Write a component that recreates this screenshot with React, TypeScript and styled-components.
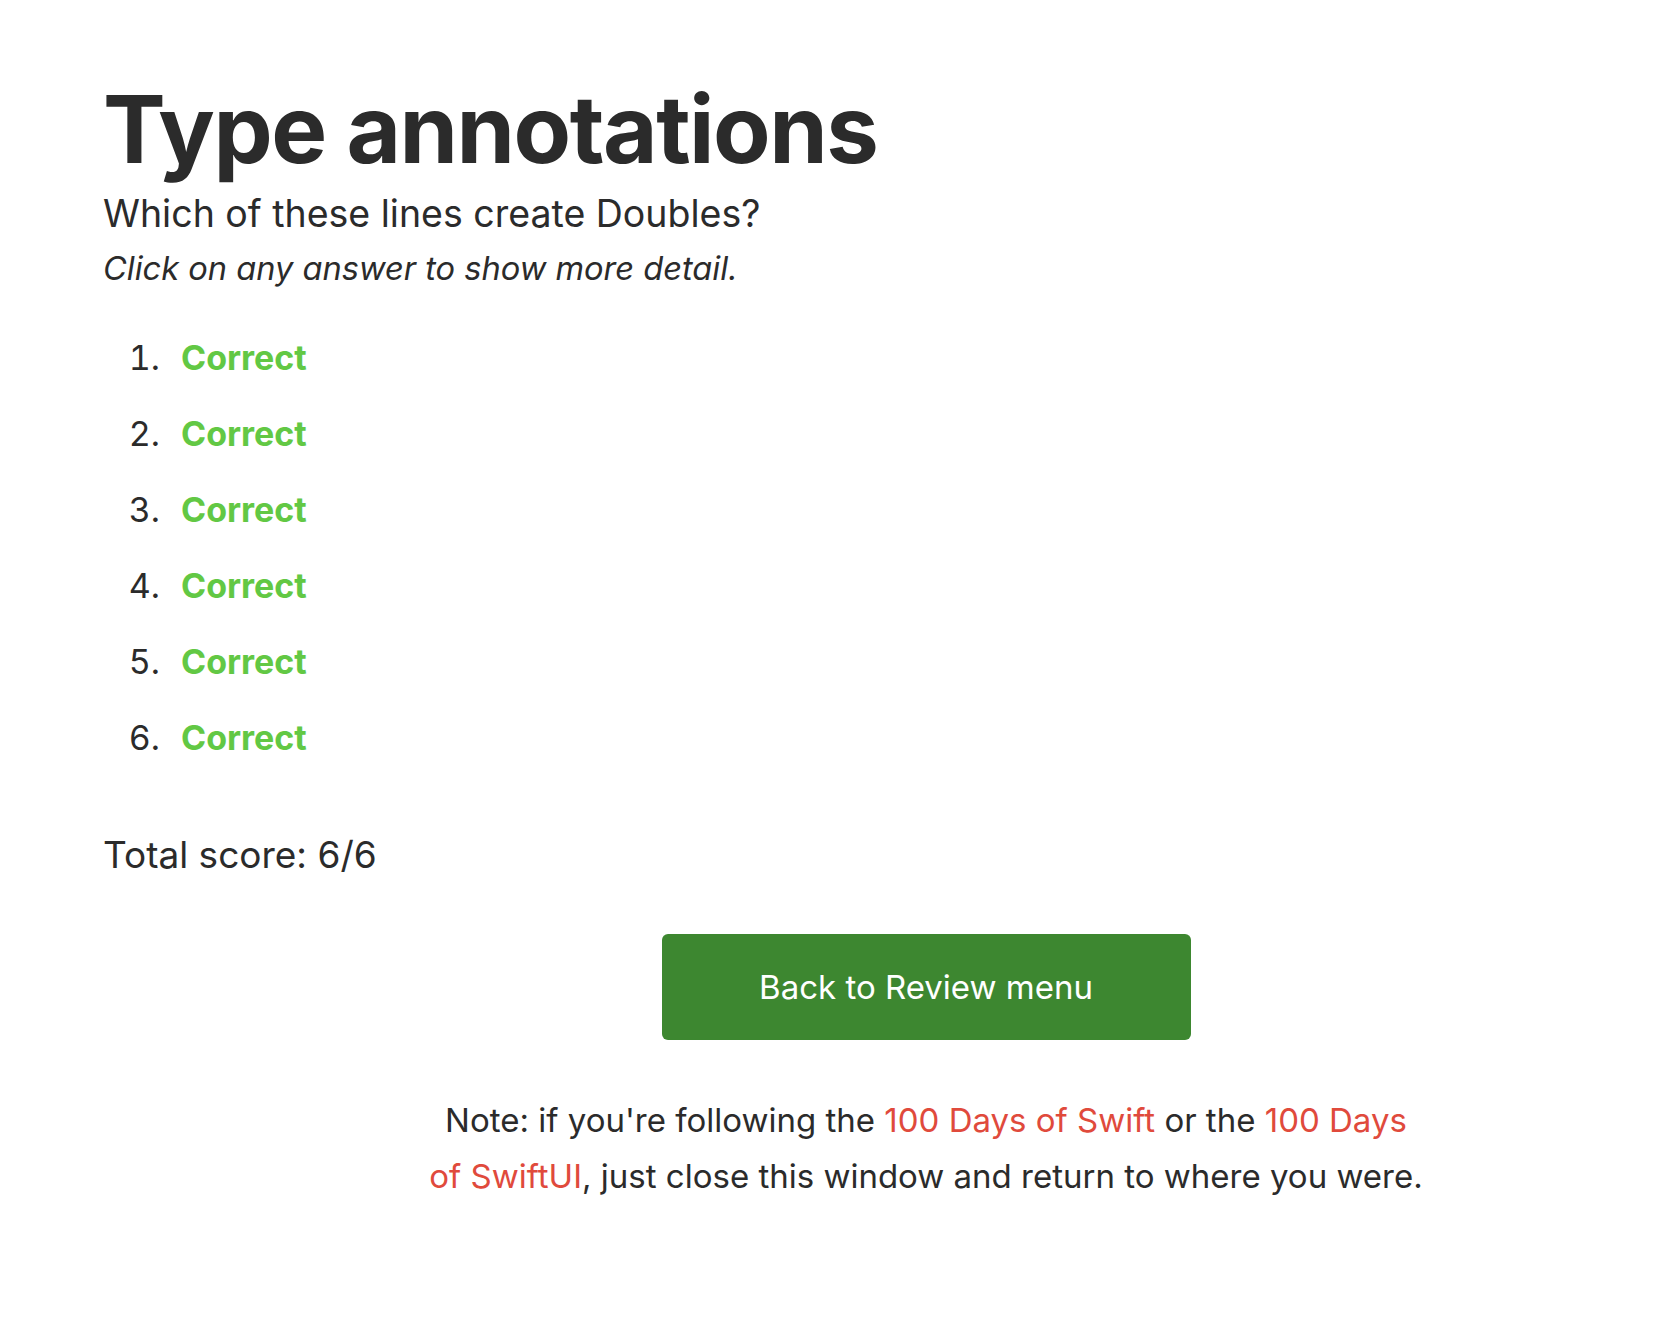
import React from "react";
import styled, { createGlobalStyle } from "styled-components";

const GlobalStyle = createGlobalStyle`
  body {
    margin: 0;
    background: #ffffff;
    color: #2b2b2b;
    font-family: Inter, "Noto Sans", sans-serif;
  }
`;

const answers = [true, true, true, true, true, true];

const App: React.FC = () => {
  const score = answers.filter(Boolean).length;

  return (
    <>
      <GlobalStyle />
      <Page>
        <Title>Type annotations</Title>
        <Question>Which of these lines create Doubles?</Question>
        <Hint>Click on any answer to show more detail.</Hint>

        <AnswerList>
          {answers.map((ok, i) => (
            <AnswerItem key={i}>
              <Verdict $ok={ok}>{ok ? "Correct" : "Wrong"}</Verdict>
            </AnswerItem>
          ))}
        </AnswerList>

        <Score>
          Total score: {score}/{answers.length}
        </Score>

        <Footer>
          <BackButton>Back to Review menu</BackButton>
          <Note>
            Note: if you're following the <NoteLink href="#">100 Days of Swift</NoteLink> or
            the <NoteLink href="#">100 Days of SwiftUI</NoteLink>, just close this window and
            return to where you were.
          </Note>
        </Footer>
      </Page>
    </>
  );
};

export default App;

const Page = styled.main`
  padding: 73px 103px 80px;
`;

const Title = styled.h1`
  margin: 0;
  font-size: 94px;
  font-weight: 700;
  letter-spacing: -1.5px;
  line-height: 1.2;
`;

const Question = styled.p`
  margin: 0;
  font-size: 37.5px;
  line-height: 1.5;
`;

const Hint = styled.p`
  margin: 0;
  font-size: 32.6px;
  font-style: italic;
  line-height: 1.6;
`;

const AnswerList = styled.ol`
  margin: 26px 0 0;
  padding-left: 66px;
  font-size: 34px;
`;

const AnswerItem = styled.li`
  height: 76px;
  line-height: 76px;
  padding-left: 12px;
`;

const Verdict = styled.span<{ $ok: boolean }>`
  font-weight: 700;
  color: ${({ $ok }) => ($ok ? "#62c844" : "#d9463a")};
`;

const Score = styled.p`
  margin: 51px 0 0;
  font-size: 37px;
  line-height: 1.5;
`;

const Footer = styled.section`
  display: flex;
  flex-direction: column;
  align-items: center;
  padding-left: 198px;
  margin-top: 51px;
`;

const BackButton = styled.button`
  width: 529px;
  height: 106px;
  border: none;
  border-radius: 6px;
  background: #3d8730;
  color: #ffffff;
  font-family: Inter, "Noto Sans", sans-serif;
  font-size: 33px;
  cursor: pointer;
`;

const Note = styled.p`
  max-width: 998px;
  margin: 52px 0 0;
  text-align: center;
  font-size: 33px;
  line-height: 56px;
`;

const NoteLink = styled.a`
  color: #e04a3c;
  text-decoration: none;
`;
